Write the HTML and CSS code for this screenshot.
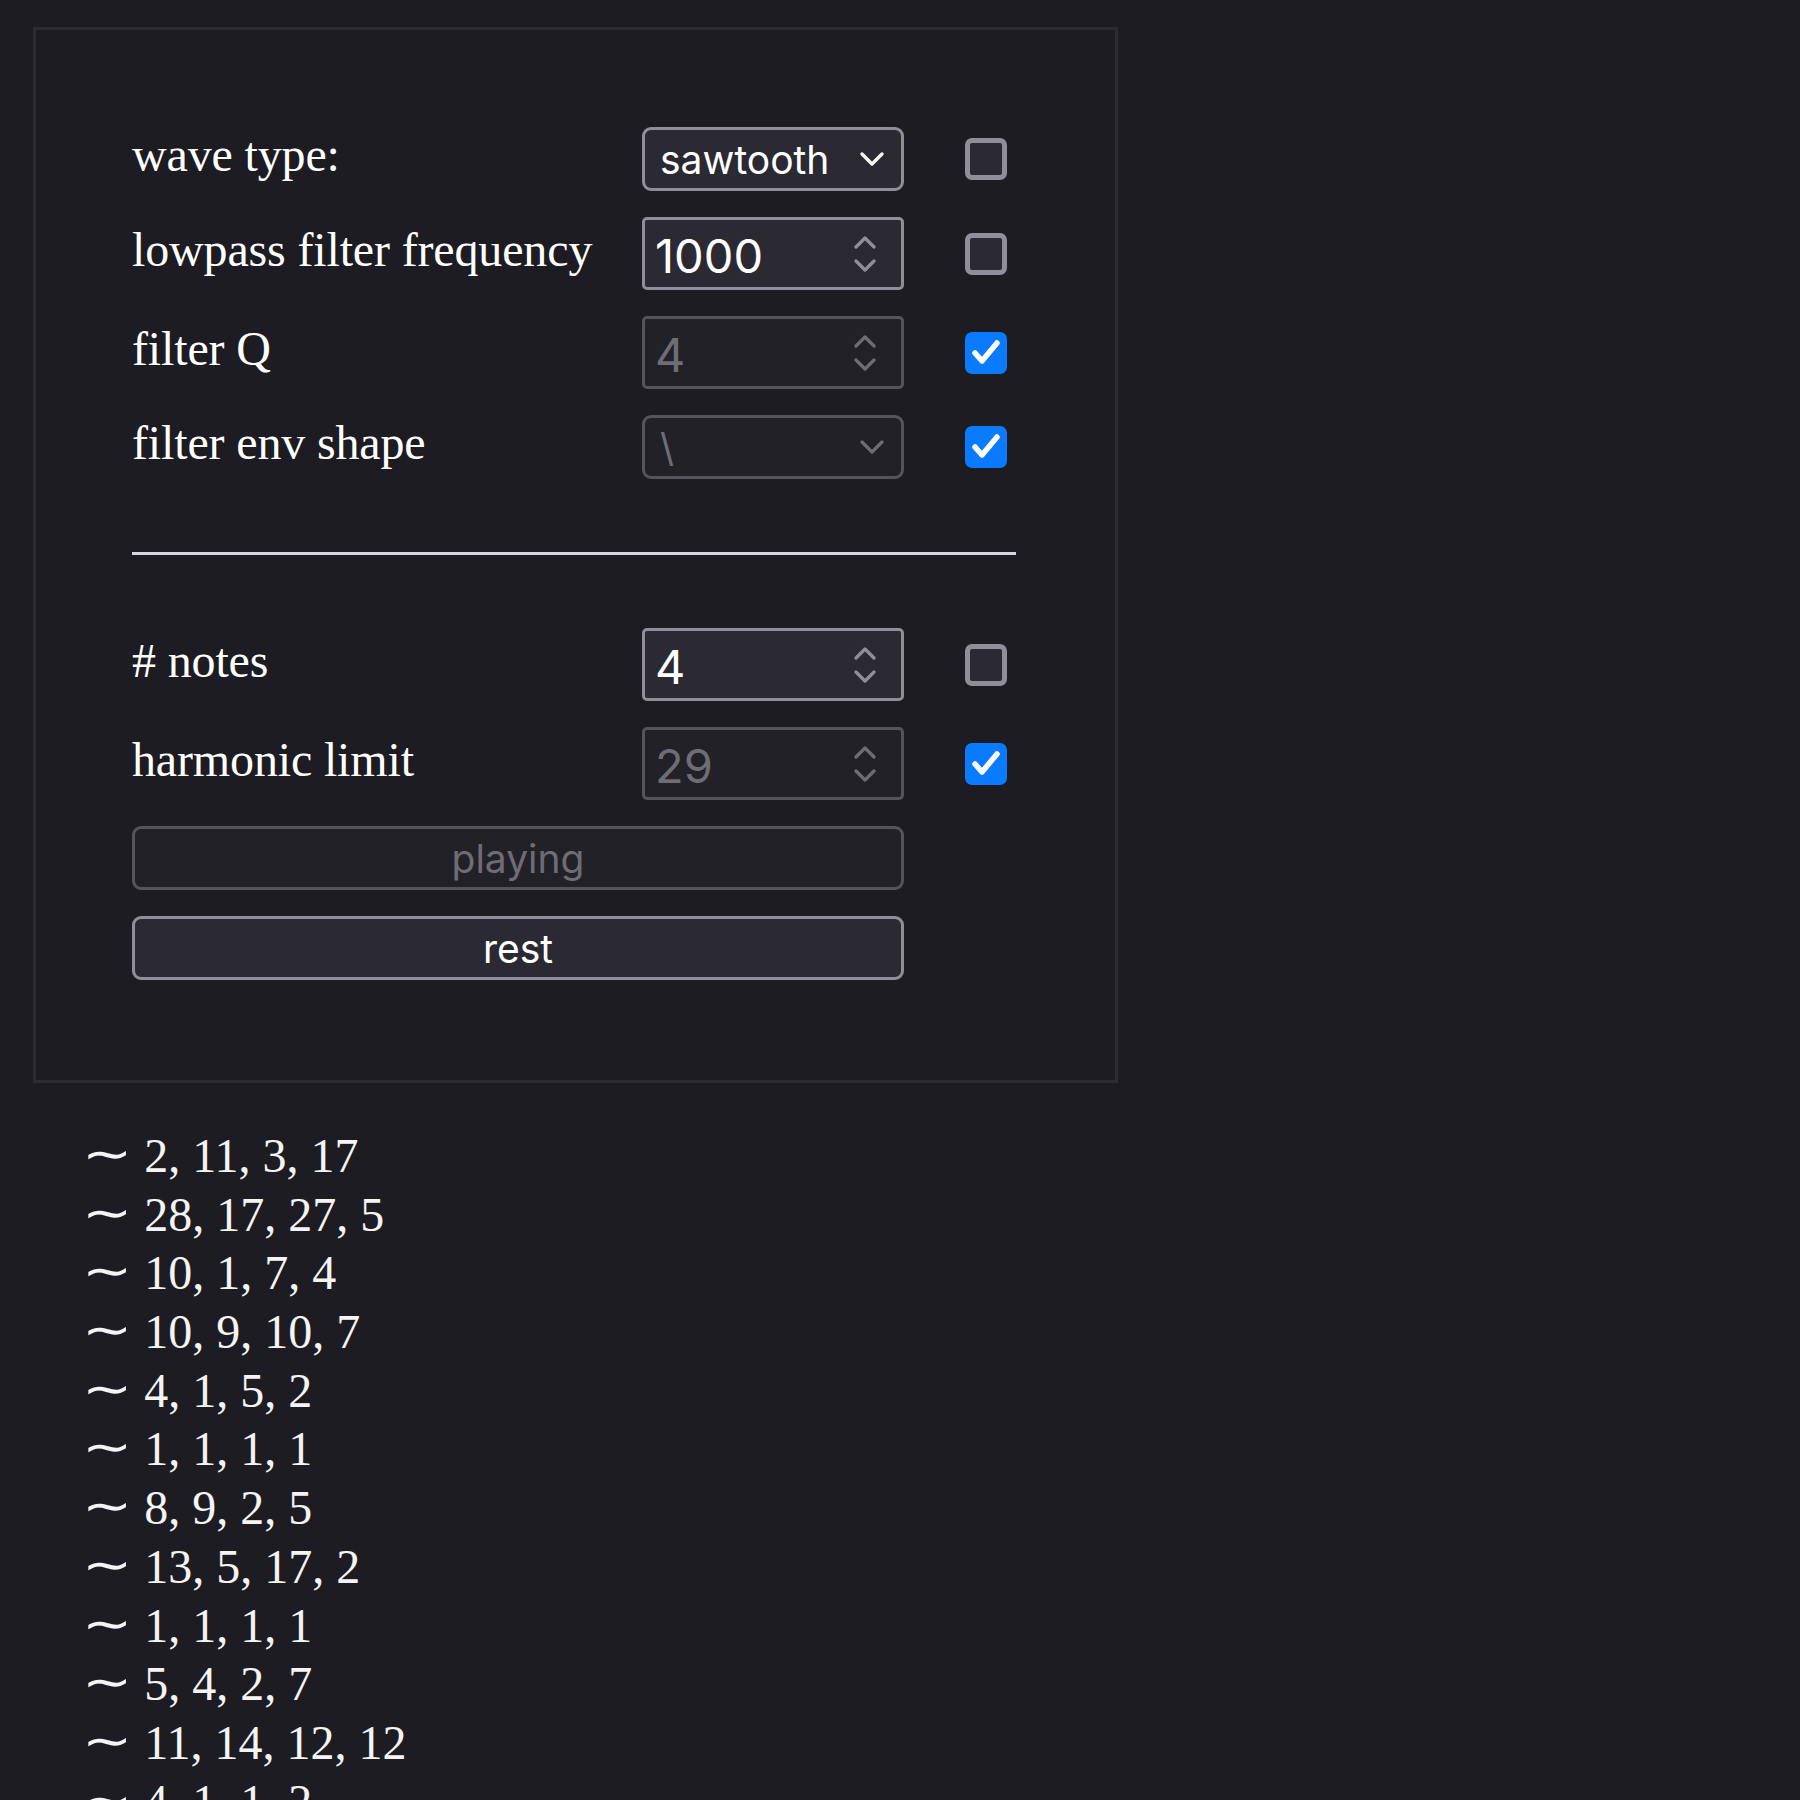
FILE: index.html
```html
<!DOCTYPE html>
<html>
<head>
<meta charset="utf-8">
<link rel="stylesheet" href="styles.css">
</head>
<body>
<div class="panel">
  <div class="rows">
    <div class="row">
      <span class="label">wave type:</span>
      <div class="control select">
        <span class="value">sawtooth</span>
        <svg class="chev" viewBox="0 0 24 14" width="24" height="14"><polyline points="2,2 12,12 22,2"/></svg>
      </div>
      <span class="check"></span>
    </div>
    <div class="row">
      <span class="label">lowpass filter frequency</span>
      <div class="control number">
        <span class="value">1000</span>
        <svg class="spin" viewBox="0 0 22 36" width="22" height="36"><polyline points="2,11 11,2 20,11"/><polyline points="2,25 11,34 20,25"/></svg>
      </div>
      <span class="check"></span>
    </div>
    <div class="row">
      <span class="label">filter Q</span>
      <div class="control number disabled">
        <span class="value">4</span>
        <svg class="spin" viewBox="0 0 22 36" width="22" height="36"><polyline points="2,11 11,2 20,11"/><polyline points="2,25 11,34 20,25"/></svg>
      </div>
      <span class="check on"><svg viewBox="0 0 42 42" width="42" height="42"><polyline points="10,21 17,29 32,11"/></svg></span>
    </div>
    <div class="row">
      <span class="label">filter env shape</span>
      <div class="control select disabled">
        <span class="value">\</span>
        <svg class="chev" viewBox="0 0 24 14" width="24" height="14"><polyline points="2,2 12,12 22,2"/></svg>
      </div>
      <span class="check on"><svg viewBox="0 0 42 42" width="42" height="42"><polyline points="10,21 17,29 32,11"/></svg></span>
    </div>
    <div class="rule"></div>
    <div class="row">
      <span class="label"># notes</span>
      <div class="control number">
        <span class="value">4</span>
        <svg class="spin" viewBox="0 0 22 36" width="22" height="36"><polyline points="2,11 11,2 20,11"/><polyline points="2,25 11,34 20,25"/></svg>
      </div>
      <span class="check"></span>
    </div>
    <div class="row">
      <span class="label">harmonic limit</span>
      <div class="control number disabled">
        <span class="value">29</span>
        <svg class="spin" viewBox="0 0 22 36" width="22" height="36"><polyline points="2,11 11,2 20,11"/><polyline points="2,25 11,34 20,25"/></svg>
      </div>
      <span class="check on"><svg viewBox="0 0 42 42" width="42" height="42"><polyline points="10,21 17,29 32,11"/></svg></span>
    </div>
    <div class="button disabled">playing</div>
    <div class="button">rest</div>
  </div>
</div>
<div class="list">
  <div class="item"><span class="tilde">∼</span> 2, 11, 3, 17</div>
  <div class="item"><span class="tilde">∼</span> 28, 17, 27, 5</div>
  <div class="item"><span class="tilde">∼</span> 10, 1, 7, 4</div>
  <div class="item"><span class="tilde">∼</span> 10, 9, 10, 7</div>
  <div class="item"><span class="tilde">∼</span> 4, 1, 5, 2</div>
  <div class="item"><span class="tilde">∼</span> 1, 1, 1, 1</div>
  <div class="item"><span class="tilde">∼</span> 8, 9, 2, 5</div>
  <div class="item"><span class="tilde">∼</span> 13, 5, 17, 2</div>
  <div class="item"><span class="tilde">∼</span> 1, 1, 1, 1</div>
  <div class="item"><span class="tilde">∼</span> 5, 4, 2, 7</div>
  <div class="item"><span class="tilde">∼</span> 11, 14, 12, 12</div>
  <div class="item"><span class="tilde">∼</span> 4, 1, 1, 2</div>
</div>
</body>
</html>
```

FILE: styles.css
```css
html, body {
  margin: 0;
  padding: 0;
  background: #1d1c22;
  color: #ffffff;
  font-family: "Liberation Serif", "Times New Roman", serif;
}

.panel {
  margin: 27px 0 0 33px;
  width: 1085px;
  box-sizing: border-box;
  border: 3px solid #2d2c33;
  padding: 97px 0 100px 96px;
}

.rows {
  width: 884px;
  display: flex;
  flex-direction: column;
  gap: 26px;
}

.row {
  display: grid;
  grid-template-columns: 510px 262px auto;
  align-items: center;
}

.label {
  font-size: 48px;
  line-height: 55px;
  margin-bottom: 9px;
  white-space: nowrap;
  letter-spacing: -0.15px;
}

.control {
  box-sizing: border-box;
  display: flex;
  align-items: center;
  justify-content: space-between;
  background: #2b2a33;
  border: 3px solid #8f8e99;
  color: #ffffff;
  font-family: Inter, "Noto Sans", sans-serif;
}

.control.select {
  height: 64px;
  border-radius: 9px;
  padding: 0 17px 0 15px;
  font-size: 39px;
}

.control.number {
  height: 73px;
  border-radius: 5px;
  padding: 0 25px 0 10px;
  font-size: 47px;
}

.control.disabled {
  background: #222127;
  border-color: #55545d;
  color: #6e6d75;
}

.chev polyline,
.spin polyline {
  fill: none;
  stroke: #ffffff;
  stroke-width: 3.2;
  stroke-linecap: round;
  stroke-linejoin: round;
}

.spin polyline {
  stroke: #8f8e99;
}

.disabled .chev polyline,
.disabled .spin polyline {
  stroke: #6e6d75;
}

.control.number .value {
  margin-top: 4px;
}

.check {
  box-sizing: border-box;
  width: 42px;
  height: 42px;
  margin-left: 61px;
  border: 5px solid #8f8e99;
  border-radius: 7px;
  background: #2b2a33;
  display: block;
}

.check.on {
  border: none;
  background: #0a7bff;
}

.check.on svg {
  display: block;
}

.check.on polyline {
  fill: none;
  stroke: #ffffff;
  stroke-width: 5.5;
  stroke-linecap: round;
  stroke-linejoin: round;
}

.rule {
  height: 3px;
  background: #d6d6d6;
  margin: 47px 0;
}

.button {
  box-sizing: border-box;
  width: 772px;
  height: 64px;
  border: 3px solid #8f8e99;
  border-radius: 9px;
  background: #2b2a33;
  color: #ffffff;
  font-family: Inter, "Noto Sans", sans-serif;
  font-size: 39px;
  display: flex;
  align-items: center;
  justify-content: center;
}

.button.disabled {
  background: #222127;
  border-color: #55545d;
  color: #6e6d75;
}

.list {
  margin: 44px 0 0 82px;
  font-size: 48px;
  line-height: 58.7px;
  color: #f4f4f4;
}

.item {
  height: 58.7px;
}

.tilde {
  display: inline-block;
  font-family: "DejaVu Sans", sans-serif;
  font-size: 48px;
  line-height: 1;
  margin-right: 10px;
  transform: translateY(-2px) scaleX(1.25);
  transform-origin: 0 50%;
}
```
